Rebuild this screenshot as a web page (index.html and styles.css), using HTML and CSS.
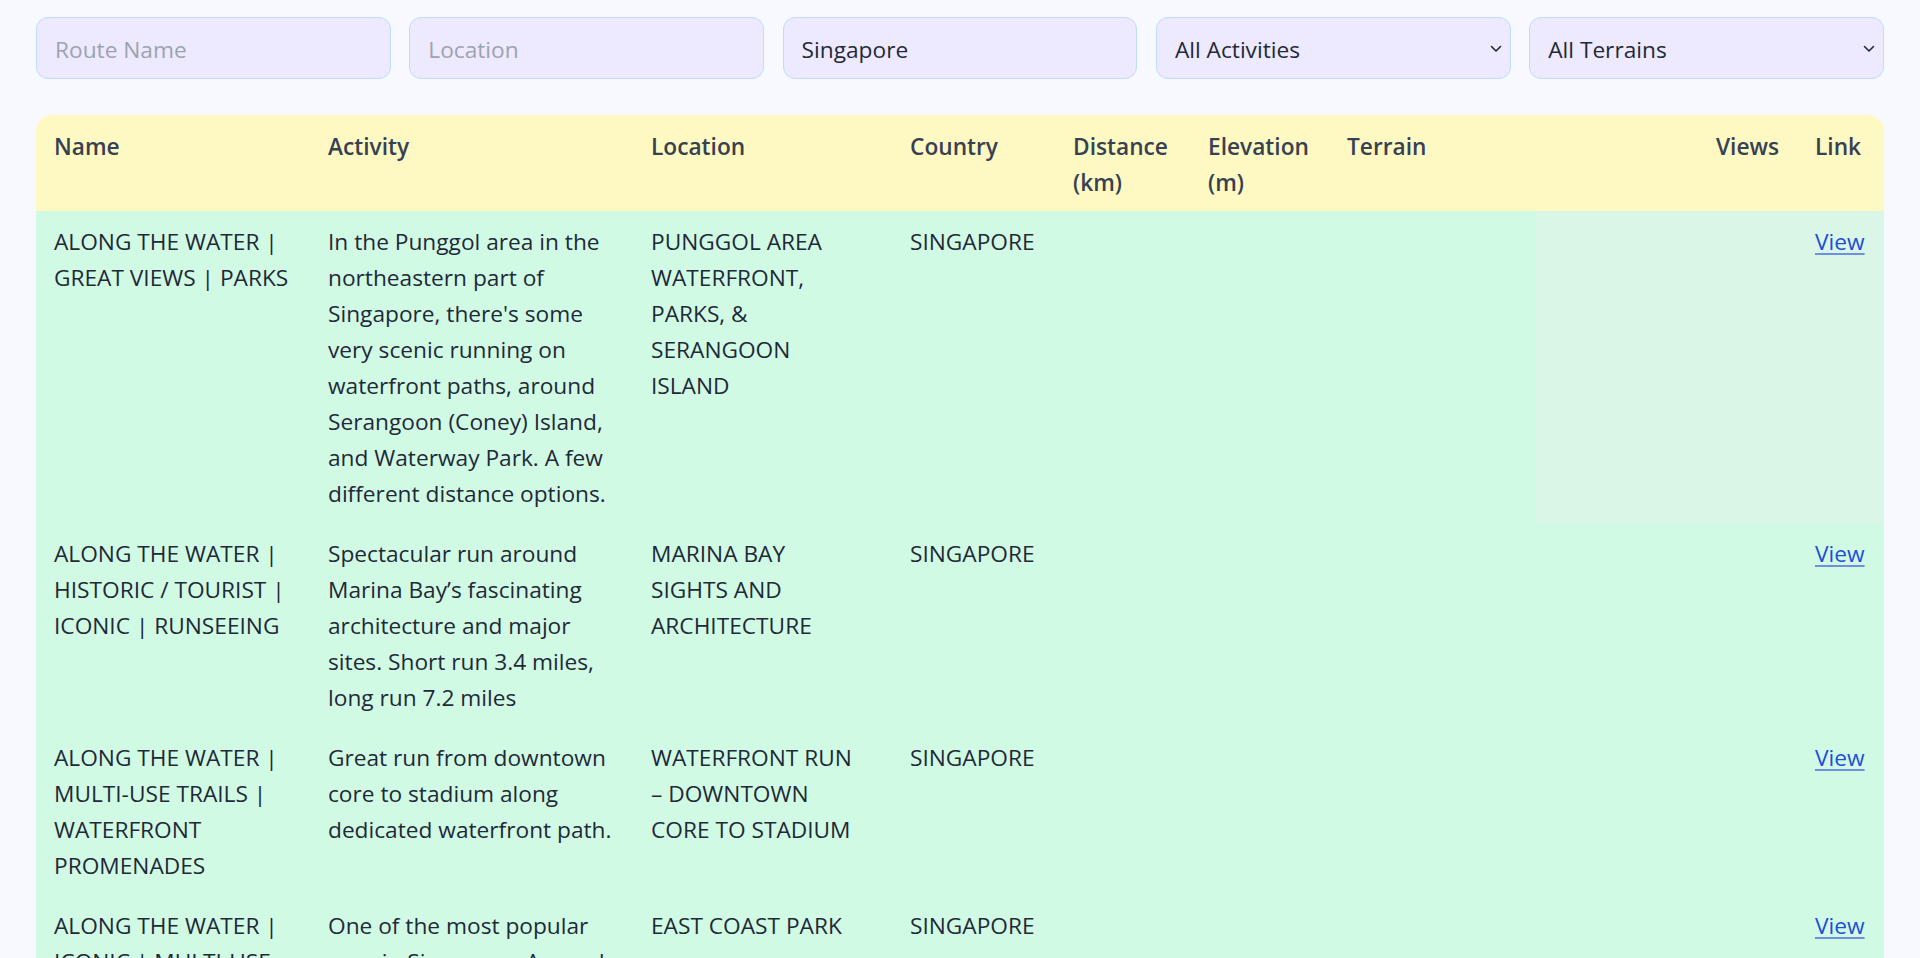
FILE: index.html
```html
<!DOCTYPE html>
<html lang="en">
<head>
<meta charset="utf-8">
<title>Routes</title>
<link rel="stylesheet" href="styles.css">
</head>
<body>
<main class="page">
  <div class="filters">
    <input class="field" type="text" placeholder="Route Name">
    <input class="field" type="text" placeholder="Location">
    <input class="field" type="text" value="Singapore">
    <div class="select-wrap">
      <select class="field select"><option>All Activities</option></select>
      <svg class="chev" width="12" height="8" viewBox="0 0 12 8"><polyline points="1.5,1.5 6,6 10.5,1.5" fill="none" stroke="#1f2937" stroke-width="1.6" stroke-linecap="round" stroke-linejoin="round"/></svg>
    </div>
    <div class="select-wrap">
      <select class="field select"><option>All Terrains</option></select>
      <svg class="chev" width="12" height="8" viewBox="0 0 12 8"><polyline points="1.5,1.5 6,6 10.5,1.5" fill="none" stroke="#1f2937" stroke-width="1.6" stroke-linecap="round" stroke-linejoin="round"/></svg>
    </div>
  </div>

  <div class="table-card">
    <table class="routes">
      <colgroup>
        <col class="c-name">
        <col class="c-activity">
        <col class="c-location">
        <col class="c-country">
        <col class="c-distance">
        <col class="c-elevation">
        <col class="c-terrain">
        <col class="c-views">
        <col class="c-link">
      </colgroup>
      <thead>
        <tr>
          <th>Name</th>
          <th>Activity</th>
          <th>Location</th>
          <th>Country</th>
          <th>Distance (km)</th>
          <th>Elevation (m)</th>
          <th>Terrain</th>
          <th class="right">Views</th>
          <th>Link</th>
        </tr>
      </thead>
      <tbody>
        <tr>
          <td>ALONG THE WATER | GREAT VIEWS | PARKS</td>
          <td>In the Punggol area in the northeastern part of Singapore, there's some very scenic running on waterfront paths, around Serangoon (Coney) Island, and Waterway Park. A few different distance options.</td>
          <td class="loc">PUNGGOL AREA WATERFRONT, PARKS, &amp; SERANGOON ISLAND</td>
          <td>SINGAPORE</td>
          <td></td>
          <td></td>
          <td></td>
          <td class="right dim"></td>
          <td class="dim"><a href="#">View</a></td>
        </tr>
        <tr>
          <td>ALONG THE WATER | HISTORIC / TOURIST | ICONIC | RUNSEEING</td>
          <td>Spectacular run around Marina Bay’s fascinating architecture and major sites. Short run 3.4 miles, long run 7.2 miles</td>
          <td class="loc">MARINA BAY SIGHTS AND ARCHITECTURE</td>
          <td>SINGAPORE</td>
          <td></td>
          <td></td>
          <td></td>
          <td class="right"></td>
          <td><a href="#">View</a></td>
        </tr>
        <tr>
          <td>ALONG THE WATER | MULTI-USE TRAILS | WATERFRONT PROMENADES</td>
          <td>Great run from downtown core to stadium along dedicated waterfront path.</td>
          <td class="loc">WATERFRONT RUN<wbr> – DOWNTOWN CORE TO STADIUM</td>
          <td>SINGAPORE</td>
          <td></td>
          <td></td>
          <td></td>
          <td class="right"></td>
          <td><a href="#">View</a></td>
        </tr>
        <tr>
          <td>ALONG THE WATER | ICONIC | MULTI-USE TRAILS | PARKS</td>
          <td>One of the most popular runs in Singapore. Around 10 miles of waterfront path along the beach.</td>
          <td class="loc">EAST COAST PARK</td>
          <td>SINGAPORE</td>
          <td></td>
          <td></td>
          <td></td>
          <td class="right"></td>
          <td><a href="#">View</a></td>
        </tr>
      </tbody>
    </table>
  </div>
</main>
</body>
</html>
```

FILE: styles.css
```css
* {
  box-sizing: border-box;
}

html, body {
  margin: 0;
  padding: 0;
}

body {
  background: #f8f9ff;
  font-family: "Open Sans", "Noto Sans", sans-serif;
  font-size: 22.7px;
  line-height: 36px;
  color: #1f2937;
}

.page {
  padding: 17px 36px 40px;
}

.filters {
  display: grid;
  grid-template-columns: repeat(5, 1fr);
  column-gap: 18.5px;
}

.field {
  width: 100%;
  height: 62px;
  margin: 0;
  padding: 2px 18px 0;
  border: 1px solid #bfdbfe;
  border-radius: 12px;
  background: #ede9fe;
  font-family: inherit;
  font-size: 22.7px;
  color: #1f2937;
  outline: none;
}

.field::placeholder {
  color: #9ca3af;
  opacity: 1;
}

.select-wrap {
  position: relative;
}

.select {
  appearance: none;
  -webkit-appearance: none;
  padding-right: 40px;
}

.chev {
  position: absolute;
  right: 9px;
  top: 28px;
  pointer-events: none;
}

.table-card {
  margin-top: 36px;
  border-radius: 16px 16px 0 0;
  overflow: hidden;
}

.routes {
  width: 100%;
  table-layout: fixed;
  border-collapse: collapse;
}

.c-name { width: 274px; }
.c-activity { width: 323px; }
.c-location { width: 259px; }
.c-country { width: 163px; }
.c-distance { width: 135px; }
.c-elevation { width: 139px; }
.c-terrain { width: 207px; }
.c-views { width: 261px; }
.c-link { width: 87px; }

.routes th {
  padding: 13.5px 18px 10.5px;
  text-align: left;
  vertical-align: top;
}

.routes td {
  padding: 12.75px 18px 11.25px;
  text-align: left;
  vertical-align: top;
}

.routes thead tr {
  background: #fef9c3;
}

.routes th {
  font-weight: 600;
  color: #374151;
}

.routes tbody tr {
  background: #d1fae5;
}

.routes td {
  color: #1f2937;
}

.routes td.loc {
  padding-right: 33px;
}

.routes .right {
  text-align: right;
}

.routes td.dim {
  background: #daf6e6;
}

.routes a {
  color: #1d4ed8;
  text-decoration: underline;
  text-decoration-color: #6f8fe3;
  text-underline-offset: 3px;
}
```
